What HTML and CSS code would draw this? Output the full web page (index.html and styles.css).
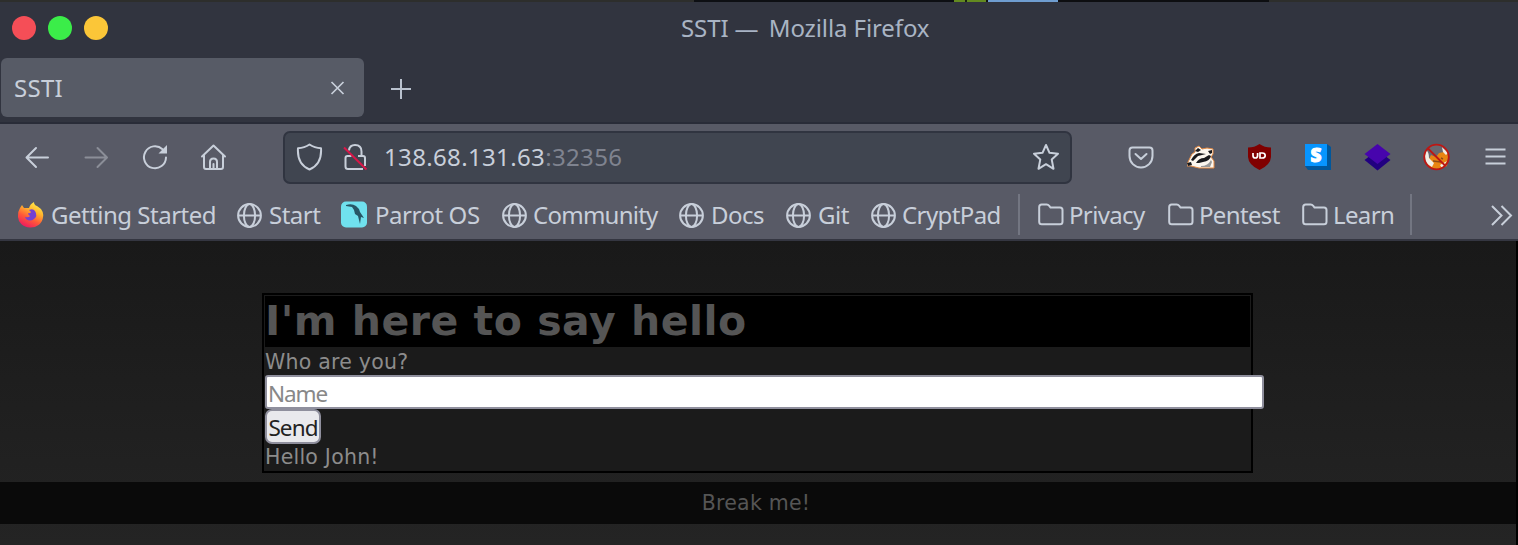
FILE: index.html
```
<!DOCTYPE html>
<html lang="en">
<head>
<meta charset="utf-8">
<title>SSTI</title>
<link rel="stylesheet" href="styles.css">
</head>
<body>
<svg class="defs" width="0" height="0">
  <defs>
    <symbol id="globe" viewBox="0 0 26 26"><g fill="none" stroke="currentColor" stroke-width="2"><circle cx="12.500" cy="13.500" r="11.400"/><ellipse cx="12.500" cy="13.500" rx="5.600" ry="11.400"/><path d="M1.500 13.500h22"/></g></symbol>
    <symbol id="folder" viewBox="0 0 26 26"><path d="M1.200 5q0-2.500 2.500-2.500h5q1.600 0 2.400 1.200l1.400 1.800h9.500q2.500 0 2.500 2.500v11.800q0 2.500-2.500 2.500H3.700q-2.500 0-2.500-2.500z" fill="none" stroke="currentColor" stroke-width="2"/></symbol>
  </defs>
</svg>
<div class="desktop"><i class="dark"></i><i class="green"></i><i class="blue"></i><i class="black"></i></div>
<header class="titlebar">
  <div class="lights"><i class="red"></i><i class="lime"></i><i class="amber"></i></div>
  <span class="t wtitle">SSTI <span class="dash">—</span> Mozilla Firefox</span>
</header>
<div class="tabs">
  <div class="tab"><span class="t tabname">SSTI</span>
    <svg width="16" height="16" viewBox="0 0 16 16"><path d="M1.500 2l12 12M13.500 2L1.500 14" stroke="currentColor" stroke-width="1.700"/></svg></div>
  <svg class="plus" width="22" height="22" viewBox="0 0 22 22"><path d="M1 11h20M11 1v20" stroke="currentColor" stroke-width="2"/></svg>
</div>
<nav class="toolbar">
  <svg class="ico" width="28" height="28" viewBox="0 0 28 28"><path d="M25 14.500H4M13 5L3.500 14.500l9.500 9.500" fill="none" stroke="currentColor" stroke-width="2" stroke-linecap="round" stroke-linejoin="round"/></svg>
  <svg class="ico dim" width="28" height="28" viewBox="0 0 28 28"><path d="M3.500 14.500h21M15.500 5L25 14.500 15.500 24" fill="none" stroke="currentColor" stroke-width="2" stroke-linecap="round" stroke-linejoin="round"/></svg>
  <svg class="ico" width="28" height="28" viewBox="0 0 28 28"><path d="M21.500 6.200A11 11 0 1 0 25 14.500" fill="none" stroke="currentColor" stroke-width="2" stroke-linecap="round"/><path d="M26 2v8.500h-8.500z" fill="currentColor"/></svg>
  <svg class="ico" width="28" height="28" viewBox="0 0 28 28"><path d="M2 13.500L13.500 2.500l11.500 11M4 12v12q0 2 2 2h15q2 0 2-2V12M10 26v-7q0-3.500 3.500-3.500t3.500 3.500v7M13.500 21v5" fill="none" stroke="currentColor" stroke-width="2" stroke-linecap="round" stroke-linejoin="round"/></svg>
  <div class="urlbar">
    <svg width="28" height="28" viewBox="0 0 28 28"><path d="M13.500 1.500Q18.500 5 25 5.200C25.700 15 22 23 13.500 26.500 5 23 1.300 15 2 5.200 8.500 5 13.500 1.500 13.500 1.500z" fill="none" stroke="currentColor" stroke-width="2" stroke-linejoin="round"/></svg>
    <svg width="28" height="28" viewBox="0 0 28 28"><path d="M7 7.500q.5-5.500 6-5.500 6.500 0 6.500 6.500V13M3.500 15v8.500q0 2.500 2.500 2.500h15M23 23v-8q0-2-2-2h-5M9.500 13H5.500q-2 0-2 2" fill="none" stroke="currentColor" stroke-width="2"/><path d="M2 4.500l22.500 22" stroke="#d91648" stroke-width="2"/></svg>
    <span class="t url">138.68.131.63<b>:32356</b></span>
    <svg class="star" width="28" height="28" viewBox="0 0 28 28"><path d="M14 2l3.500 7.800 8.500.9-6.300 5.700 1.800 9.400-7.500-4.600-7.500 4.600 1.800-9.400L2 10.700l8.500-.9z" fill="none" stroke="currentColor" stroke-width="2" stroke-linejoin="round"/></svg>
  </div>
  <div class="exts">
    <svg width="26" height="28" viewBox="0 0 26 28"><path d="M4.500 4.500h17q3 0 3 3V13a11.500 11.500 0 0 1-23 0V7.500q0-3 3-3zM7.500 11l5.500 5 5.500-5" fill="none" stroke="currentColor" stroke-width="2" stroke-linecap="round" stroke-linejoin="round"/></svg>
    <svg width="28" height="28" viewBox="0 0 28 28"><path d="M0 21L5 11 8 9V5l4-2 3 3 5-1 6 1v5l-2 3 3 4v7H12l-8-2H0z" fill="#fbf6ee" stroke="#e48a42" stroke-width="1"/><path d="M0 20l4-1 1 3-4 1zM8 8l3-3 3 2-3 2zM21 8l4-1v3l-2 1zM4 17q3-6 8-7l7 1-8 2-5 5zM9 20q3-5 8-5l5-3 2 1q-1 5-8 6l-4 1z" fill="#18191c"/><path d="M14 23q7 0 10-6l1 2-2 5h-9z" fill="#999"/></svg>
    <svg width="26" height="28" viewBox="0 0 26 28"><path d="M12.500 1Q17.500 4.500 24 4.500V14Q23.500 22 12.500 27 1.500 22 1 14V4.500Q7.500 4.500 12.500 1z" fill="#800000"/><path d="M6 10v2.500q0 2.500 2.300 2.500t2.300-2.500V10M13 10v5h2.200q3 0 3-2.500t-3-2.500z" fill="none" stroke="#fff" stroke-width="1.700"/></svg>
    <svg width="28" height="28" viewBox="0 0 28 28"><path d="M1 23l3 4h23V4l-4-3z" fill="#00579c"/><path d="M1 1h22v22H1z" fill="#0795ff"/><text x="12" y="18.500" class="sletter">S</text></svg>
    <svg width="28" height="28" viewBox="0 0 28 28"><path d="M.5 17l13-10 13 10-13 10.500z" fill="#210080"/><path d="M.5 11L13.500 1l13 10-13 10z" fill="#4704ad"/></svg>
    <svg width="28" height="28" viewBox="0 0 28 28"><circle cx="13.500" cy="14" r="12.500" fill="#686870"/><path d="M8 12l5 2 3-4 5-1 3-3 1 8-1 9-8 3-9-1-3-5z" fill="#e98512"/><path d="M3 7q3 2 3 8l5 5-2 4Q2 21 2 13zM19 4l6 6-2 2-3-3zM17 22l7-4-5 7z" fill="#f2eee5"/><path d="M10 18l8 1M18 15l2 1" stroke="#8c4b18" stroke-width="1.500"/><circle cx="13.500" cy="14" r="12.300" fill="none" stroke="#bd1714" stroke-width="1.800"/><path d="M4.500 5l18 18" stroke="#bd1714" stroke-width="1.800"/></svg>
    <svg class="menu" width="22" height="28" viewBox="0 0 22 28"><path d="M1.500 6.500h20M1.500 13.500h20M1.500 20.500h20" stroke="currentColor" stroke-width="2"/></svg>
  </div>
</nav>
<nav class="bookmarks">
  <div><svg width="26" height="28" viewBox="0 0 26 28"><defs><linearGradient id="ff" x1=".8" y1="0" x2=".3" y2="1"><stop offset="0" stop-color="#fff44f"/><stop offset=".35" stop-color="#ffb52d"/><stop offset=".65" stop-color="#ff5a38"/><stop offset="1" stop-color="#ee1762"/></linearGradient></defs><path d="M2 7l2-3 2 3 5 0q1-4 5-6 0 3 3 4l4 3q3 4 2 8a12.400 11 0 0 1-25-1Q0 10 2 7z" fill="url(#ff)"/><path d="M11 9q4-2 6 1 3 5-1 8-4 3-8 0l-1-2q4 1 5-1-2-1-2-3 2 1 3-1z" fill="#7441d4"/></svg><span class="t b1">Getting Started</span></div>
  <div><svg width="26" height="26"><use href="#globe"/></svg><span class="t b2">Start</span></div>
  <div><svg width="26" height="27" viewBox="0 0 26 27"><rect width="26" height="26" y=".5" rx="5" fill="#70e1ee"/><path d="M5 4q6-2 10 1 3 2 4 6l4 6-3-1-1 7-2-8-3-2-1-4-2-3-6-1z" fill="#275766"/></svg><span class="t b3">Parrot OS</span></div>
  <div><svg width="26" height="26"><use href="#globe"/></svg><span class="t b4">Community</span></div>
  <div><svg width="26" height="26"><use href="#globe"/></svg><span class="t b5">Docs</span></div>
  <div><svg width="26" height="26"><use href="#globe"/></svg><span class="t b6">Git</span></div>
  <div><svg width="26" height="26"><use href="#globe"/></svg><span class="t b7">CryptPad</span></div>
  <i class="sep"></i>
  <div><svg width="26" height="26"><use href="#folder"/></svg><span class="t b8">Privacy</span></div>
  <div><svg width="26" height="26"><use href="#folder"/></svg><span class="t b9">Pentest</span></div>
  <div><svg width="26" height="26"><use href="#folder"/></svg><span class="t b10">Learn</span></div>
  <i class="sep"></i>
  <svg class="more" width="22" height="22" viewBox="0 0 22 22"><path d="M1 2l9.500 9.500L1 21M10.500 2l9.500 9.500-9.500 9.500" fill="none" stroke="currentColor" stroke-width="2"/></svg>
</nav>
<main class="page">
  <section class="card">
    <h1>I'm here to say hello</h1>
    <label class="who">Who are you?</label>
    <div class="field t">Name</div>
    <button class="send t">Send</button>
    <p class="hello">Hello John!</p>
  </section>
  <footer>Break me!</footer>
</main>
</body>
</html>
```
FILE: styles.css
```
* { box-sizing: border-box; }
body { margin: 0; width: 1518px; height: 545px; overflow: hidden; background: #31343f; color: #c8cfda; font-family: "Noto Sans", sans-serif; font-size: 24px; }
svg { display: block; flex: none; }
.defs { position: absolute; }
.t { white-space: nowrap; line-height: 34px; }
.desktop { height: 2px; background: #2d2e2c; display: flex; padding-left: 694px; }
.desktop .dark { width: 260px; background: #0d0f13; }
.desktop .green { width: 34px; background: linear-gradient(90deg, #638a20 0 11px, #17220e 11px 13px, #638a20 13px 32px, #111 32px); }
.desktop .blue { width: 70px; background: #6f9dd0; }
.desktop .black { width: 211px; background: #0d0e11; }
.titlebar { height: 56px; display: flex; align-items: center; padding: 0 0 5px 12px; color: #a9b4c4; }
.wtitle { letter-spacing: -.1px; }
.dash { letter-spacing: 4px; }
.lights { display: flex; gap: 12px; width: 669px; }
.lights i { width: 24px; height: 24px; border-radius: 50%; }
.red { background: #f54e57; }
.lime { background: #3bed49; }
.amber { background: #fbc638; }
.tabs { height: 66px; display: flex; align-items: flex-start; padding-left: 1px; border-bottom: 2px solid #292c38; }
.tab { width: 363px; height: 59px; border-radius: 6px; background: #575b66; display: flex; align-items: center; justify-content: space-between; padding: 0 18px 0 13px; }
.tabname { letter-spacing: .3px; }
.plus { margin: 20px 0 0 26px; color: #b9c1ce; }
.toolbar { height: 66px; background: #585a66; display: flex; align-items: center; padding-left: 23px; }
.ico { margin-right: 31px; }
.ico:nth-child(4) { margin-right: 55px; }
.dim { color: #8b8e98; }
.urlbar { width: 789px; height: 53px; border: 2px solid #303440; border-radius: 7px; background: #404550; display: flex; align-items: center; padding: 0 10px 0 11px; }
.urlbar svg:nth-child(2) { margin: 0 14px 0 18px; }
.url { letter-spacing: .35px; }
.urlbar b { font-weight: 400; color: #7f838f; }
.star { margin-left: auto; }
.exts { flex: 1; display: grid; grid-template-columns: 59px 60px 57px 60px 59px 61px 22px; margin-left: 56px; align-items: center; }
.sletter { font: 900 19px "Noto Sans", sans-serif; fill: #fff; text-anchor: middle; stroke: #fff; stroke-width: 1; }
.bookmarks { height: 51px; background: #585a66; border-bottom: 2px solid #343641; display: grid; grid-template-columns: 219px 104px 161px 177px 107px 85px 148px 19px 130px 134px 109px 80px 22px; padding-left: 18px; align-items: center; }
.bookmarks div { display: flex; align-items: center; gap: 6px; letter-spacing: -.5px; }
.bookmarks .b1 { margin-left: 1px; letter-spacing: -.5px; }
.bookmarks .b3 { margin-left: 2px; letter-spacing: -.45px; }
.bookmarks .b4 { margin-left: -1px; letter-spacing: -.75px; }
.bookmarks .b7 { margin-left: -1px; letter-spacing: -.6px; }
.bookmarks .b8, .bookmarks .b9, .bookmarks .b10 { margin-left: -1px; letter-spacing: -.65px; }
.sep { height: 41px; margin-left: -1px; border-left: 2px solid #737682; }
.page { width: 1516px; height: 304px; padding-top: 52px; background: linear-gradient(#191919, #242424); box-shadow: 2px 0 #000; font-family: "DejaVu Sans", sans-serif; font-size: 20.5px; letter-spacing: .23px; color: #8c8c8c; }
.card { width: 991px; height: 180px; margin-left: 262px; border: 2px solid #000; background: #1b1b1b; padding: 1px; }
h1 { margin: 0; height: 51px; background: #000; color: #555; font: 700 41px/50px "DejaVu Sans", sans-serif; letter-spacing: .5px; white-space: nowrap; }
.who { display: block; height: 28px; line-height: 30px; }
.field { width: 999px; height: 34px; border: 2px solid #8f8f9d; border-radius: 3px; background: #fff; color: #888; font-family: "Noto Sans", sans-serif; font-size: 22.500px; letter-spacing: -1.1px; padding-left: 1px; line-height: 33px; }
.send { display: block; width: 56px; height: 35px; border: 2px solid #8f8f9d; border-radius: 7px; background: #e9e9ed; color: #222; font-family: "Noto Sans", sans-serif; font-size: 22.500px; letter-spacing: -.9px; padding: 1px 0 0; line-height: 32px; }
.hello { margin: 0; height: 26px; line-height: 27px; }
footer { margin-top: 9px; height: 42px; padding-right: 4px; background: #0a0a0a; color: #555; text-align: center; line-height: 43px; }
```
